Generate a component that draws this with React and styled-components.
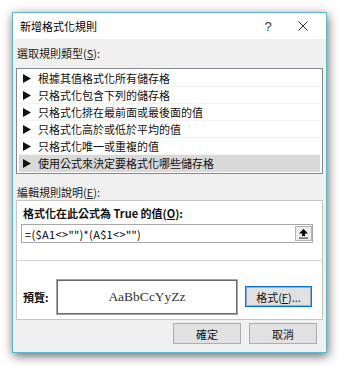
import styled, { createGlobalStyle } from "styled-components";

const GlobalStyle = createGlobalStyle`
    html, body {
        margin: 0;
        background: #ffffff;
    }
    body {
        font-family: "Noto Sans CJK TC", "Noto Sans", sans-serif;
        font-size: 11px;
        color: #1a1a1a;
    }
`;

const StyledPage = styled.div`
    width: 340px;
    height: 366px;
    padding: 12px 0 0 12px;
    box-sizing: border-box;
`;

const StyledDialog = styled.div`
    width: 315px;
    height: 341px;
    box-sizing: border-box;
    border: 1px solid #5fb9cc;
    display: flex;
    flex-direction: column;
    box-shadow: 1px 3px 10px rgba(0, 0, 0, 0.6);
`;

const StyledTitleBar = styled.div`
    height: 26px;
    flex-shrink: 0;
    display: flex;
    align-items: center;
    padding-left: 7px;
    background: #ffffff;
`;

const StyledTitle = styled.div`
    flex: 1;
    font-size: 11px;
    line-height: 16px;
    color: #000;
`;

const StyledTitleButton = styled.div`
    width: ${props => props.width}px;
    height: 26px;
    display: flex;
    align-items: center;
    justify-content: center;
    font-family: "Liberation Sans", sans-serif;
    font-size: 13px;
    color: #333;
`;

const StyledBody = styled.div`
    flex: 1;
    background: #f0f0f0;
    padding: 0 3px;
    display: flex;
    flex-direction: column;
`;

const StyledSectionLabel = styled.div`
    margin-top: ${props => props.top}px;
    padding-left: 1px;
    line-height: ${props => props.lineHeight}px;
    color: #222;
    u {
        text-decoration: underline;
    }
`;

const StyledRuleList = styled.div`
    margin-top: 6px;
    height: 106px;
    box-sizing: border-box;
    border: 1px solid #828790;
    background: #ffffff;
    padding: 1px 2px;
`;

const StyledRuleItem = styled.div`
    height: 17px;
    box-sizing: border-box;
    display: flex;
    align-items: center;
    padding-left: 4px;
    gap: 7px;
    line-height: 16px;
    color: #111;
    background: ${props => (props.selected ? "#d9d9d9" : "transparent")};
    border-bottom: 1px solid ${props => (props.selected ? "#d9d9d9" : "#f2f2f2")};
`;

const StyledEditGroup = styled.div`
    height: 120px;
    box-sizing: border-box;
    border: 1px solid #c6c6c6;
    background: #ffffff;
    display: flex;
    flex-direction: column;
`;

const StyledFormulaSection = styled.div`
    height: 60px;
    box-sizing: border-box;
    border-bottom: 1px solid #d4d4d4;
    padding-top: 4px;
`;

const StyledFieldLabel = styled.div`
    padding-left: 6px;
    line-height: 16px;
    font-weight: bold;
    color: #111;
`;

const StyledFormulaInput = styled.div`
    margin: 3px 9px 0 4px;
    height: 19px;
    box-sizing: border-box;
    border: 1px solid #a8a8a8;
    display: flex;
    align-items: center;
    padding-left: 3px;
`;

const StyledFormulaText = styled.div`
    flex: 1;
    line-height: 16px;
    letter-spacing: 0.35px;
    color: #000;
    white-space: pre;
`;

const StyledCollapseButton = styled.div`
    width: 17px;
    height: 15px;
    box-sizing: border-box;
    border: 1px solid #b4b4b4;
    background: #ececec;
    display: flex;
    align-items: center;
    justify-content: center;
`;

const StyledPreviewRow = styled.div`
    flex: 1;
    display: flex;
    align-items: flex-start;
    padding: 18px 0 0 6px;
`;

const StyledPreviewLabel = styled.div`
    width: 33px;
    height: 36px;
    display: flex;
    align-items: center;
    font-weight: bold;
    color: #111;
`;

const StyledPreviewBox = styled.div`
    width: 182px;
    height: 36px;
    box-sizing: border-box;
    border: 1px solid #a6a6a6;
    box-shadow: inset 0 0 0 1px #6a6a6a;
    display: flex;
    align-items: center;
    justify-content: center;
    font-family: "Liberation Serif", serif;
    font-size: 13.5px;
    color: #333;
`;

const StyledButton = styled.div`
    width: ${props => props.width || 68}px;
    height: 21px;
    box-sizing: border-box;
    border: 1px solid ${props => (props.focused ? "#0078d7" : "#adadad")};
    box-shadow: ${props => (props.focused ? "inset 0 0 0 1px #7eb4ea" : "none")};
    background: #e1e1e1;
    display: flex;
    align-items: center;
    justify-content: center;
    line-height: 16px;
    color: #111;
    u {
        text-decoration: underline;
    }
`;

const StyledFormatButton = styled(StyledButton)`
    margin: 7px 0 0 7px;
`;

const StyledButtonRow = styled.div`
    margin-top: 3px;
    display: flex;
    justify-content: flex-end;
    gap: 8px;
    padding-right: 6px;
`;

const rules = [
    "根據其值格式化所有儲存格",
    "只格式化包含下列的儲存格",
    "只格式化排在最前面或最後面的值",
    "只格式化高於或低於平均的值",
    "只格式化唯一或重複的值",
    "使用公式來決定要格式化哪些儲存格",
];

function Arrow() {
    return (
        <svg width="8" height="9" viewBox="0 0 8 9">
            <polygon points="0,0 8,4.5 0,9" fill="#111" />
        </svg>
    );
}

function CloseIcon() {
    return (
        <svg width="10" height="10" viewBox="0 0 10 10">
            <path d="M0.5 0.5 L9.5 9.5 M9.5 0.5 L0.5 9.5" stroke="#333" strokeWidth="1" />
        </svg>
    );
}

function UploadIcon() {
    return (
        <svg width="9" height="10" viewBox="0 0 9 10">
            <polygon points="4.5,0 9,4.5 6,4.5 6,7 3,7 3,4.5 0,4.5" fill="#000" />
            <rect x="0" y="8.5" width="9" height="1.3" fill="#555" />
        </svg>
    );
}

export default function App() {
    return (
        <StyledPage>
            <GlobalStyle />
            <StyledDialog>
                <StyledTitleBar>
                    <StyledTitle>新增格式化規則</StyledTitle>
                    <StyledTitleButton width={24}>?</StyledTitleButton>
                    <StyledTitleButton width={46}><CloseIcon /></StyledTitleButton>
                </StyledTitleBar>
                <StyledBody>
                    <StyledSectionLabel top={5} lineHeight={18}>
                        選取規則類型(<u>S</u>):
                    </StyledSectionLabel>
                    <StyledRuleList>
                        {rules.map((rule, i) => (
                            <StyledRuleItem key={rule} selected={i === rules.length - 1}>
                                <Arrow />
                                {rule}
                            </StyledRuleItem>
                        ))}
                    </StyledRuleList>
                    <StyledSectionLabel top={10} lineHeight={16}>
                        編輯規則說明(<u>E</u>):
                    </StyledSectionLabel>
                    <StyledEditGroup>
                        <StyledFormulaSection>
                            <StyledFieldLabel>
                                格式化在此公式為 True 的值(<u>O</u>):
                            </StyledFieldLabel>
                            <StyledFormulaInput>
                                <StyledFormulaText>=($A1&lt;&gt;"")*(A$1&lt;&gt;"")</StyledFormulaText>
                                <StyledCollapseButton><UploadIcon /></StyledCollapseButton>
                            </StyledFormulaInput>
                        </StyledFormulaSection>
                        <StyledPreviewRow>
                            <StyledPreviewLabel>預覽:</StyledPreviewLabel>
                            <StyledPreviewBox>AaBbCcYyZz</StyledPreviewBox>
                            <StyledFormatButton width={67} focused>
                                格式(<u>F</u>)...
                            </StyledFormatButton>
                        </StyledPreviewRow>
                    </StyledEditGroup>
                    <StyledButtonRow>
                        <StyledButton>確定</StyledButton>
                        <StyledButton>取消</StyledButton>
                    </StyledButtonRow>
                </StyledBody>
            </StyledDialog>
        </StyledPage>
    );
}
